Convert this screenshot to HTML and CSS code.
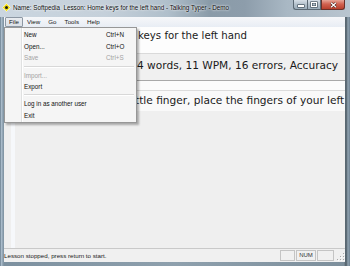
FILE: index.html
```html
<!DOCTYPE html>
<html>
<head>
<meta charset="utf-8">
<title>Talking Typer - Demo</title>
<link rel="stylesheet" href="styles.css">
</head>
<body>
<div class="window">
  <div class="titlebar">
    <svg class="appicon" width="9" height="9" viewBox="0 0 9 9"><path d="M4.5 0.4 L8.6 4.5 L4.5 8.6 L0.4 4.5Z" fill="#f3df17" stroke="#fffbe0" stroke-width="0.7"/><circle cx="4.5" cy="4.5" r="1.5" fill="#1c1c1c"/></svg>
    <span class="title">Name: Softpedia&nbsp; Lesson: Home keys for the left hand - Talking Typer - Demo</span>
    <div class="caption">
      <div class="cbtn min"><span class="gmin"></span></div>
      <div class="cbtn max"><span class="gmax"></span></div>
      <div class="cbtn close"><svg width="7" height="6" viewBox="0 0 7 6"><path d="M1 0.8 L6 5.2 M6 0.8 L1 5.2" stroke="#3a1410" stroke-width="2.2"/><path d="M1 0.8 L6 5.2 M6 0.8 L1 5.2" stroke="#fff" stroke-width="1.3"/></svg></div>
    </div>
  </div>
  <div class="frame">
    <div class="menubar">
      <span class="mi active">File</span>
      <span class="mi">View</span>
      <span class="mi">Go</span>
      <span class="mi">Tools</span>
      <span class="mi">Help</span>
    </div>
    <div class="client">
      <div class="row r1"><span class="lead l1">Lesson 1 of 12: Home </span>keys for the left hand</div>
      <div class="row r2"><span class="lead l2">Last session: typed </span>4 words, 11 WPM, 16 errors, Accuracy</div>
      <div class="gap"></div>
      <div class="row r3"><span class="lead l3">Starting with your li</span>ttle finger, place the fingers of your left hand on the home keys.</div>
      <div class="lower"></div>
    </div>
    <div class="statusbar">
      <span class="stext">Lesson stopped, press return to start.</span>
      <span class="pane p1"></span>
      <span class="pane p2">NUM</span>
      <span class="pane p3"></span>
      <svg class="grip" width="9" height="9" viewBox="0 0 9 9">
        <g fill="#fff"><rect x="8" y="8" width="1" height="1"/><rect x="5" y="8" width="1" height="1"/><rect x="2" y="8" width="1" height="1"/><rect x="8" y="5" width="1" height="1"/><rect x="5" y="5" width="1" height="1"/><rect x="8" y="2" width="1" height="1"/></g>
        <g fill="#a9a9a9"><rect x="7" y="7" width="1" height="1"/><rect x="4" y="7" width="1" height="1"/><rect x="1" y="7" width="1" height="1"/><rect x="7" y="4" width="1" height="1"/><rect x="4" y="4" width="1" height="1"/><rect x="7" y="1" width="1" height="1"/></g>
      </svg>
    </div>
  </div>
  <div class="dropdown">
    <div class="item"><span>New</span><span class="key">Ctrl+N</span></div>
    <div class="item"><span>Open...</span><span class="key">Ctrl+O</span></div>
    <div class="item disabled"><span>Save</span><span class="key">Ctrl+S</span></div>
    <div class="sep"></div>
    <div class="item disabled"><span>Import...</span></div>
    <div class="item"><span>Export</span></div>
    <div class="sep"></div>
    <div class="item"><span>Log in as another user</span></div>
    <div class="item"><span>Exit</span></div>
  </div>
</div>
</body>
</html>
```
FILE: styles.css
```css
* { box-sizing: border-box; margin: 0; padding: 0; }
html, body { width: 350px; height: 266px; overflow: hidden; }
body {
  font-family: "Liberation Sans", Arial, sans-serif;
  font-size: 6.3px;
  color: #111;
  background: #fff;
}
.window {
  position: relative;
  width: 350px;
  height: 266px;
  display: flex;
  flex-direction: column;
  background: linear-gradient(to right, #687c8c 0, #a9bbca 1.5px, #8a9dac 3px, #7c909f 4px, #8ea0ad 50%, #7d8f9c 344px, #4d5a63 346px, #90a3b1 348px, #6e8191 350px);
}
.titlebar {
  height: 17px;
  flex-shrink: 0;
  display: flex;
  align-items: flex-start;
  background: linear-gradient(to right, #cbd6e0 0%, #c5d0da 30%, #b0bfcb 48%, #8a9ba8 60%, #8d9dab 70%, #a9b8c4 82%, #b9c5cf 100%);
}
.appicon { margin: 3px 0 0 2px; flex-shrink: 0; }
.title {
  margin: 4px 0 0 2px;
  line-height: 8px;
  white-space: nowrap;
  color: #0c0c0c;
  text-shadow: 0 0 2px #fff, 0 0 3px rgba(255,255,255,.85);
}
.caption { margin-left: auto; margin-right: 5px; display: flex; }
.cbtn {
  height: 10px;
  display: flex;
  align-items: center;
  justify-content: center;
  border: 1px solid #5a6873;
  border-top: 0;
}
.min {
  width: 14px;
  border-right: 0;
  border-radius: 0 0 0 3px;
  background: linear-gradient(#d6dfe7, #b2c0cb 50%, #9badba);
}
.max {
  width: 14px;
  background: linear-gradient(#d6dfe7, #b2c0cb 50%, #9badba);
}
.close {
  width: 24px;
  border-color: #6b3028;
  border-radius: 0 0 3px 0;
  background: linear-gradient(#e7a698, #d26250 45%, #b83f2c);
}
.gmin {
  width: 6px;
  height: 2px;
  margin-top: 3px;
  background: #fff;
  box-shadow: 0 0 0 0.6px #3b4853;
}
.gmax {
  width: 6px;
  height: 5px;
  border: 1px solid #fff;
  border-top-width: 1.5px;
  box-shadow: 0 0 0 0.6px #3b4853, inset 0 0 0 0.5px #3b4853;
}
.frame {
  flex: 1;
  display: flex;
  flex-direction: column;
  margin: 0 5px 4px 4px;
  min-height: 0;
}
.menubar {
  height: 10px;
  flex-shrink: 0;
  display: flex;
  padding-left: 1px;
  background: linear-gradient(#f6f7f9, #e8edf4);
}
.mi {
  padding: 0 3px;
  border: 1px solid transparent;
  line-height: 8px;
  font-size: 6.2px;
  color: #151515;
}
.mi.active {
  border-color: #8c97a3;
  background: linear-gradient(#e8ebef, #dce1e7);
  border-radius: 1px;
}
.client {
  flex: 1;
  min-height: 0;
  display: flex;
  flex-direction: column;
  background: #efefef;
}
.row {
  flex-shrink: 0;
  white-space: nowrap;
  overflow: hidden;
  font-family: "DejaVu Sans", Verdana, sans-serif;
  font-size: 10.6px;
  line-height: 12px;
  padding-left: 8px;
  color: #1a1a1a;
}
.lead {
  display: inline-block;
  vertical-align: top;
  overflow: hidden;
  white-space: nowrap;
  height: 12px;
}
.l1 { width: 126px; }
.l2 { width: 125px; }
.l3 { width: 123px; }
.r1 {
  height: 27px;
  padding-top: 2.5px;
  font-size: 10.2px;
  background: #fdfdfd;
  border-bottom: 1px solid #dadada;
}
.r2 {
  height: 27px;
  padding-top: 4.5px;
  background: #f0f0f0;
  border-bottom: 1px solid #a8a8a8;
}
.gap {
  flex-shrink: 0;
  height: 10px;
  background: #fbfbfb;
  border-bottom: 1px solid #dcdcdc;
}
.r3 {
  height: 20px;
  padding-top: 3px;
  background: #f9f9f9;
}
.lower {
  flex: 1;
  margin-left: 7px;
  border-left: 4px solid #f6f8fb;
}
.statusbar {
  height: 14px;
  flex-shrink: 0;
  display: flex;
  align-items: center;
  border-top: 1px solid #c9c9c9;
  background: #f0f0f0;
}
.stext { font-size: 6.2px; white-space: nowrap; color: #1a1a1a; }
.pane {
  height: 11px;
  border: 1px solid #c4c4c4;
  font-size: 6px;
  line-height: 9px;
  text-align: center;
  color: #333;
}
.p1 { margin-left: auto; width: 15px; }
.p2 { width: 20px; margin-left: 1px; }
.p3 { width: 17px; margin-left: 1px; }
.grip { margin-left: 2px; align-self: flex-end; margin-bottom: 1px; }
.dropdown {
  position: absolute;
  left: 4px;
  top: 27px;
  width: 133px;
  padding: 1px 0;
  background-color: #f5f5f5;
  background-image: linear-gradient(to right, transparent 16px, #e0e1e1 16px, #e0e1e1 17px, #fff 17px, #fff 18px, transparent 18px);
  border: 1px solid #979797;
  box-shadow: 2px 2px 2px rgba(0,0,0,.3);
}
.item {
  display: flex;
  align-items: center;
  height: 11.6px;
  padding-left: 19px;
  font-size: 6.3px;
  color: #111;
  white-space: nowrap;
}
.key { margin-left: auto; width: 30px; }
.disabled { color: #a3a3a3; }
.sep {
  height: 5.5px;
  margin: 0 2px 0 19px;
  background: linear-gradient(transparent 2px, #d8d8d8 2px, #d8d8d8 3px, #fff 3px, #fff 4px, transparent 4px);
}
```
